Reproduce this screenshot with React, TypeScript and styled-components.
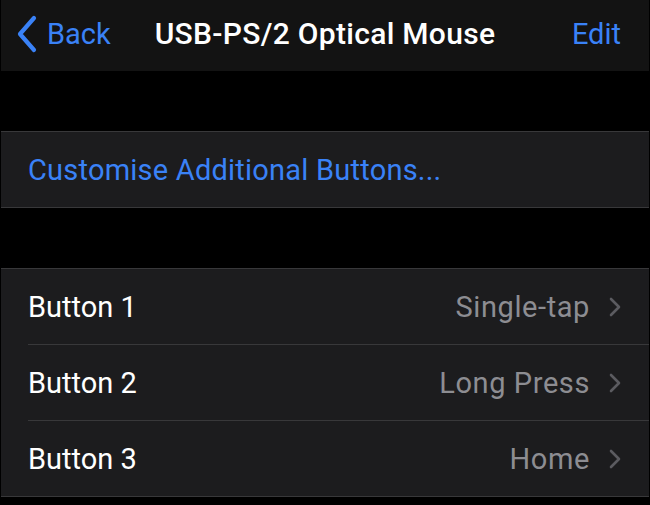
import React from "react";
import styled, { createGlobalStyle } from "styled-components";

const Global = createGlobalStyle`
  html, body { margin: 0; padding: 0; background: #000; }
  body { font-family: Roboto, "Noto Sans", sans-serif; -webkit-font-smoothing: antialiased; }
`;

const Screen = styled.div`
  width: 650px;
  height: 505px;
  background: #000;
  padding: 0 1px;
  box-sizing: border-box;
  display: flex;
  flex-direction: column;
  overflow: hidden;
`;

const NavBar = styled.div`
  height: 71px;
  background: #131313;
  display: grid;
  grid-template-columns: 1fr auto 1fr;
  align-items: center;
  padding: 0 28px 4px 28px;
  box-sizing: border-box;
`;

const NavButton = styled.div<{ $align?: "start" | "end" }>`
  display: flex;
  align-items: center;
  gap: 8px;
  justify-self: ${(p) => (p.$align === "end" ? "end" : "start")};
  margin-left: ${(p) => (p.$align === "end" ? "0" : "-14px")};
  color: #3a82f7;
  font-size: 29px;
`;

const Title = styled.div`
  color: #fff;
  font-size: 30px;
  font-weight: 500;
  letter-spacing: 0.3px;
`;

const Group = styled.div<{ $top: number }>`
  margin-top: ${(p) => p.$top}px;
  background: #1c1c1e;
  border-top: 1px solid #38383a;
  border-bottom: 1px solid #38383a;
`;

const LinkRow = styled.div`
  height: 75px;
  display: flex;
  align-items: center;
  padding: 0 27px;
  color: #3a82f7;
  font-size: 29px;
  letter-spacing: 0.22px;
`;

const Row = styled.div<{ $last?: boolean }>`
  height: 75px;
  margin-left: 27px;
  padding-right: 28px;
  display: flex;
  align-items: center;
  justify-content: space-between;
  border-bottom: ${(p) => (p.$last ? "none" : "1px solid #38383a")};
`;

const Label = styled.span`
  color: #fff;
  font-size: 29px;
`;

const Value = styled.span`
  display: flex;
  align-items: center;
  gap: 19px;
  color: #8d8d92;
  font-size: 29px;
  letter-spacing: 0.6px;
`;

const BackChevron = () => (
  <svg width="24" height="38" viewBox="0 0 24 38">
    <path d="M19 3 L5 19 L19 35" fill="none" stroke="#3a82f7" strokeWidth="4.2" strokeLinecap="round" strokeLinejoin="round" />
  </svg>
);

const Disclosure = () => (
  <svg width="12" height="20" viewBox="0 0 12 20">
    <path d="M2 2 L10 10 L2 18" fill="none" stroke="#5b5b60" strokeWidth="2.6" strokeLinecap="round" strokeLinejoin="round" />
  </svg>
);

const rows = [
  { label: "Button 1", value: "Single-tap" },
  { label: "Button 2", value: "Long Press" },
  { label: "Button 3", value: "Home" },
];

export default function App() {
  return (
    <>
      <Global />
      <Screen>
        <NavBar>
          <NavButton>
            <BackChevron />
            Back
          </NavButton>
          <Title>USB-PS/2 Optical Mouse</Title>
          <NavButton $align="end">Edit</NavButton>
        </NavBar>
        <Group $top={60}>
          <LinkRow>Customise Additional Buttons...</LinkRow>
        </Group>
        <Group $top={60}>
          {rows.map((r, i) => (
            <Row key={r.label} $last={i === rows.length - 1}>
              <Label>{r.label}</Label>
              <Value>
                {r.value}
                <Disclosure />
              </Value>
            </Row>
          ))}
        </Group>
      </Screen>
    </>
  );
}
